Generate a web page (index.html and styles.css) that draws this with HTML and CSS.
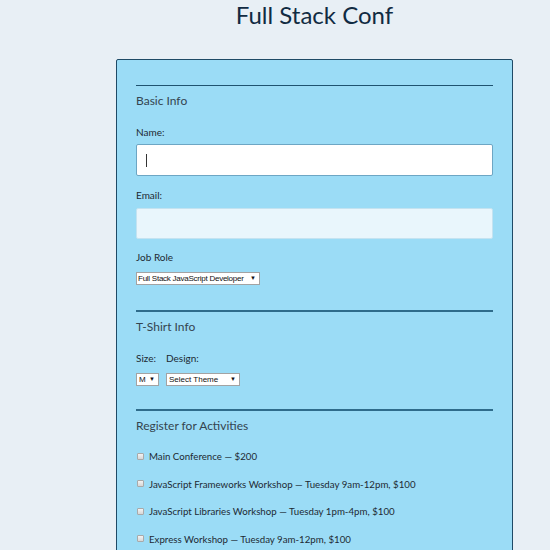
FILE: index.html
```html
<!DOCTYPE html>
<html lang="en">
<head>
<meta charset="utf-8">
<title>Full Stack Conf</title>
<link rel="stylesheet" href="styles.css">
</head>
<body>
<div class="page">
  <h1 class="title">Full Stack Conf</h1>
  <form class="card">
    <section class="group group-first">
      <h2 class="legend">Basic Info</h2>
      <label class="label label-name" for="name">Name:</label>
      <div class="text-input focused" id="name"><span class="caret"></span></div>
      <label class="label label-email" for="mail">Email:</label>
      <div class="text-input email" id="mail"></div>
      <label class="label label-role">Job Role</label>
      <span class="select select-role">Full Stack JavaScript Developer</span>
    </section>
    <section class="group">
      <h2 class="legend">T-Shirt Info</h2>
      <div class="shirt">
        <div class="shirt-col">
          <span class="label">Size:</span>
          <span class="select select-size">M</span>
        </div>
        <div class="shirt-col">
          <span class="label">Design:</span>
          <span class="select select-design">Select Theme</span>
        </div>
      </div>
    </section>
    <section class="group">
      <h2 class="legend">Register for Activities</h2>
      <ul class="activities">
        <li class="activity"><span class="box"></span>Main Conference — $200</li>
        <li class="activity"><span class="box"></span>JavaScript Frameworks Workshop — Tuesday 9am-12pm, $100</li>
        <li class="activity"><span class="box"></span>JavaScript Libraries Workshop — Tuesday 1pm-4pm, $100</li>
        <li class="activity"><span class="box"></span>Express Workshop — Tuesday 9am-12pm, $100</li>
      </ul>
    </section>
  </form>
</div>
</body>
</html>
```

FILE: styles.css
```css
html, body {
  margin: 0;
  padding: 0;
  background: #e8eff5;
}
body {
  font-family: Lato, "Open Sans", sans-serif;
  color: #222;
}
.page {
  margin-left: 116px;
  width: 397px;
}
.title {
  margin: 0 0 29px;
  font-size: 24px;
  line-height: 30px;
  font-weight: 400;
  color: #112b42;
  text-align: center;
}
.card {
  box-sizing: border-box;
  width: 397px;
  height: 520px;
  background: #9bdcf6;
  border: 1px solid #1f4a66;
  border-radius: 2px;
  padding: 25px 19px 0;
}
.group {
  border-top: 2px solid #2f6c8b;
  display: flex;
  flex-direction: column;
  align-items: flex-start;
}
.group-first {
  border-top: 1px solid #1f5370;
}
.legend {
  margin: 7px 0 0;
  font-size: 12px;
  line-height: 16px;
  font-weight: 400;
  color: #34444f;
}
.label {
  display: block;
  font-size: 10px;
  line-height: 12px;
  color: #1d2a33;
}
.label-name { margin-top: 17px; }
.label-email { margin-top: 13px; }
.label-role { margin-top: 12px; }
.text-input {
  box-sizing: border-box;
  width: 357px;
  height: 32px;
  margin-top: 6px;
  border-radius: 2px;
  display: flex;
  align-items: center;
  padding-left: 9px;
}
.focused {
  background: #fff;
  border: 1px solid #6da6c4;
}
.email {
  height: 31px;
  margin-top: 7px;
  background: #e9f6fc;
  border: 1px solid #c4e3f1;
}
.caret {
  width: 1px;
  height: 13px;
  background: #333;
}
.select {
  position: relative;
  box-sizing: border-box;
  display: block;
  height: 13px;
  background: #fff;
  border: 1px solid #a3a3a3;
  font-family: "Liberation Sans", Arial, sans-serif;
  font-size: 8px;
  line-height: 11px;
  color: #111;
  padding-left: 2px;
  white-space: nowrap;
  overflow: hidden;
}
.select::after {
  content: "▼";
  position: absolute;
  right: 3px;
  top: 0;
  font-size: 6px;
  line-height: 11px;
  letter-spacing: 0;
}
.select-role {
  width: 124px;
  margin-top: 9px;
  padding-left: 1px;
  letter-spacing: -0.25px;
}
.shirt {
  display: flex;
  gap: 7px;
  margin-top: 17px;
}
.shirt-col {
  display: flex;
  flex-direction: column;
}
.shirt-col .select {
  margin-top: 9px;
}
.select-size { width: 23px; }
.select-design { width: 74px; }
.group + .group {
  margin-top: 25px;
}
.group + .group + .group {
  margin-top: 23px;
}
.activities {
  list-style: none;
  margin: 16px 0 0;
  padding: 0;
  display: flex;
  flex-direction: column;
  gap: 15.5px;
}
.activity {
  display: flex;
  align-items: center;
  font-size: 9.7px;
  line-height: 12px;
  color: #1d2a33;
}
.box {
  box-sizing: border-box;
  width: 7px;
  height: 7px;
  margin-left: 1px;
  margin-right: 5px;
  border: 1px solid #a9a9a9;
  border-radius: 1px;
  background: linear-gradient(#f3f3f3, #d6d6d6);
}
```
